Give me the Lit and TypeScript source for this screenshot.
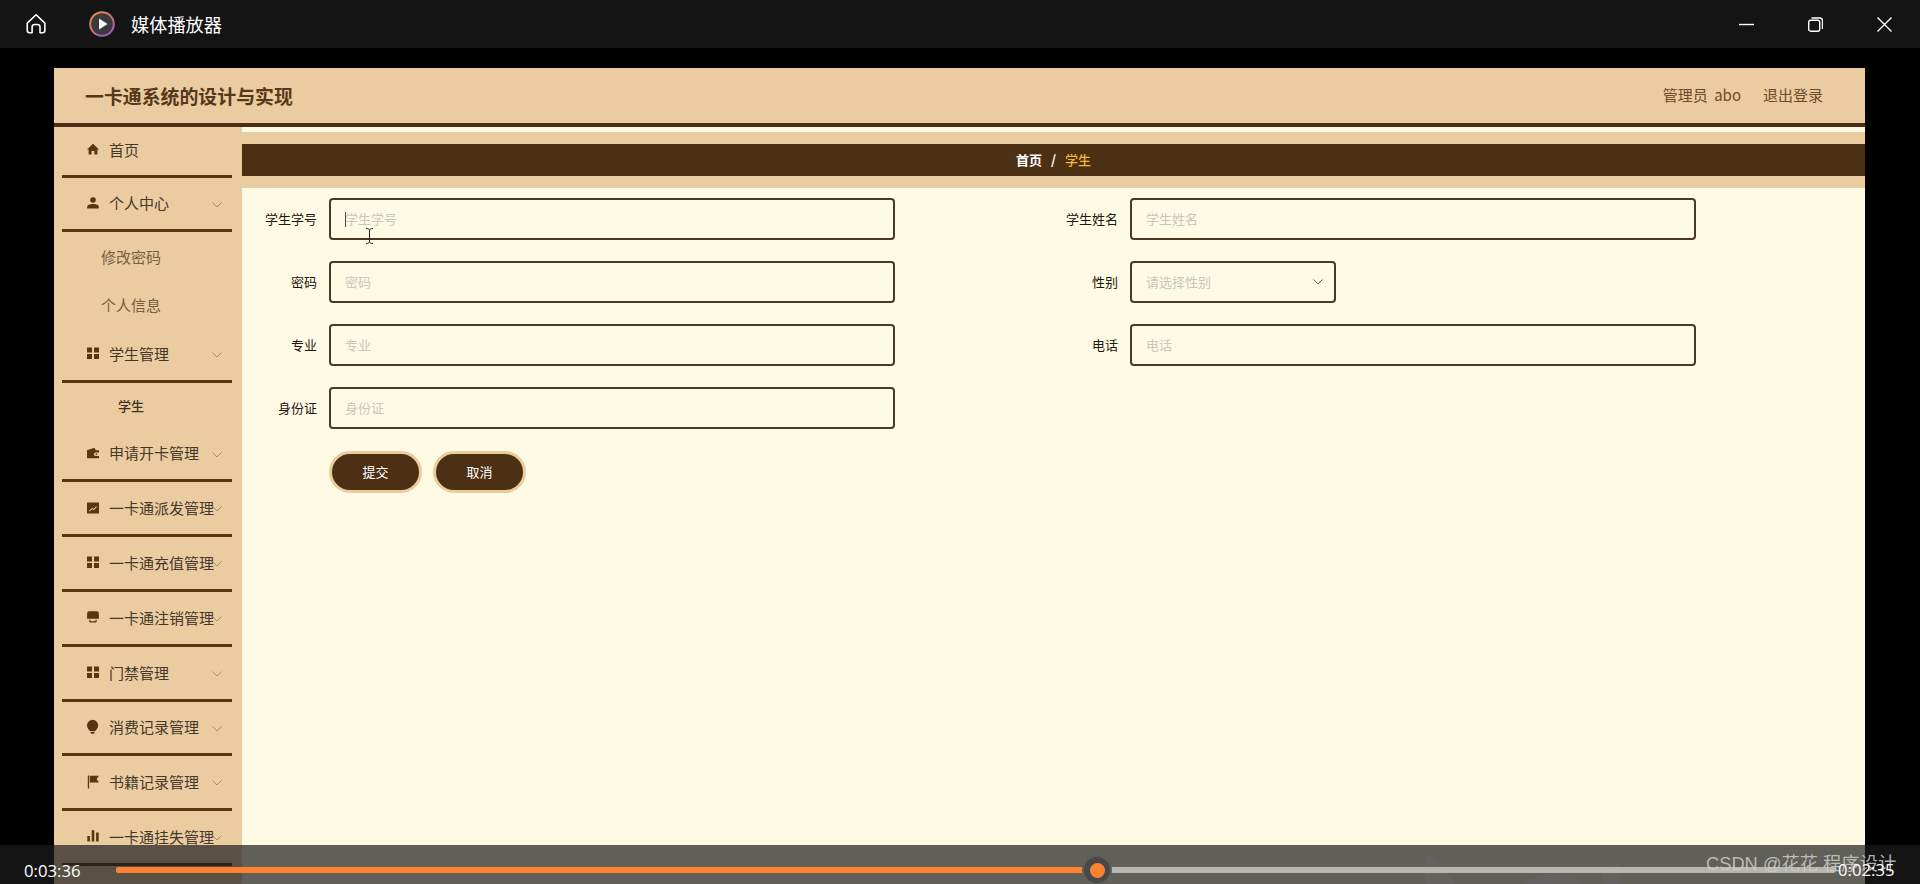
import { LitElement, html, css, svg } from "lit";
import { customElement } from "lit/decorators.js";

const icons: Record<string, unknown> = {
  home: svg`<path d="M6 .8 12 6.400h-1.600v5.200H7.400V8H4.600v3.600H1.600V6.400H0z"/>`,
  user: svg`<circle cx="6" cy="3" r="2.800"/><path d="M.2 11.400V9.800C.2 8 2.800 7 6 7s5.800 1 5.800 2.800v1.600z"/>`,
  menu: svg`<path d="M0 .5h5v5H0zM7 .5h5v5H7zM0 7h5v5H0zM7 7h5v5H7z"/>`,
  wallet: svg`<path fill-rule="evenodd" d="M0 3.200 7.600.8l1 2.400H12v2.200H8.600a1.800 1.800 0 0 0 0 3.600H12v2.200H0zM8.600 6.400h1.600v1.600H8.600z"/>`,
  chart: svg`<path fill-rule="evenodd" d="M0 .5h12v11H0zM2 8.800l.7.7 2.600-2.400 1.500 1.200 3-3.400-.7-.6-2.400 2.700-1.400-1.200z"/>`,
  print: svg`<path d="M2 .3h8a1.800 1.800 0 0 1 1.800 1.700l.2 5.800H0L.2 2A1.800 1.800 0 0 1 2 .3z"/><path fill-rule="evenodd" d="M2.200 8.800h7.600l-.4 2.700H2.600zM3.500 8.800h5l-.2 1.500H3.700z"/>`,
  bulb: svg`<path d="M5.600-1.200a5.600 5.600 0 0 1 5.600 5.600c0 2.500-1.800 3.900-2.800 5.700H2.800C1.800 8.300 0 6.900 0 4.400A5.600 5.600 0 0 1 5.600-1.200zM3.300 10.800h4.600l-.9 2H4.200z"/>`,
  flag: svg`<path d="M.8-.5h1.300v13H.8zM2.800-.2h9.200L9.600 3l2.400 3.400H2.800z"/>`,
  bars: svg`<path d="M.3 6h2.600v5.500H.3zM4.700.3h2.600v11.200H4.700zM9.100 2.500h2.600v9H9.100z"/>`,
};

const icon = (n: string) => html`<svg class="ic" viewBox="0 0 12 12">${icons[n]}</svg>`;
const chev = html`<svg class="chev" viewBox="0 0 10 6"><path d="M.5.500 5 5 9.500.500"/></svg>`;

type Item = { i: string; t: string };
const after: Item[] = [
  { i: "chart", t: "一卡通派发管理" },
  { i: "menu", t: "一卡通充值管理" },
  { i: "print", t: "一卡通注销管理" },
  { i: "menu", t: "门禁管理" },
  { i: "bulb", t: "消费记录管理" },
  { i: "flag", t: "书籍记录管理" },
  { i: "bars", t: "一卡通挂失管理" },
];

@customElement("app-root")
export class AppRoot extends LitElement {
  static styles = css`
    :host {
      display: block;
      position: relative;
      width: 1920px;
      height: 884px;
      overflow: hidden;
      background: #000;
      font-family: "Noto Sans CJK SC", "Noto Sans", sans-serif;
    }
    .titlebar {
      height: 48px;
      background: #141414;
      display: flex;
      align-items: center;
      color: #fff;
      font-size: 18px;
    }
    .tb-home { width: 24px; height: 24px; margin-left: 24px; fill: none; stroke: #fff; stroke-width: 1.8; stroke-linejoin: round; }
    .tb-logo { width: 26px; height: 26px; margin-left: 41px; }
    .tb-title { margin-left: 16px; font-size: 18.200px; }
    .win { margin-left: auto; display: flex; align-items: center; gap: 54px; margin-right: 28px; }
    .win svg { width: 15px; height: 15px; fill: none; stroke: #fff; stroke-width: 1.4; display: block; }
    .frame { margin: 20px 55px 0 54px; }
    .hdr {
      height: 55px;
      background: #ebcca1;
      border-bottom: 4px solid #4b2e14;
      display: flex;
      align-items: center;
      padding: 0 42px 0 31px;
      color: #6a4a28;
      font-size: 15px;
    }
    .brand { font-size: 18.900px; font-weight: 700; color: #55381a; }
    .hdr-r { margin-left: auto; display: flex; gap: 22px; word-spacing: 3px; padding-bottom: 2px; }
    .body { display: flex; }
    .side {
      width: 188px;
      flex: none;
      background: #ebcca1;
      box-sizing: border-box;
      padding: 0 10px 0 8px;
      height: 760px;
    }
    .it {
      position: relative;
      height: 54.800px;
      box-sizing: border-box;
      border-bottom: 3px solid #593510;
      display: flex;
      align-items: center;
      padding: 0 0 1.500px 25px;
      font-size: 15px;
      color: #43382a;
      white-space: nowrap;
    }
    .it.first { height: 50.500px; padding-bottom: 3px; }
    .ic { width: 12px; height: 12px; fill: #593510; flex: none; margin-right: 10px; overflow: visible; }
    .chev {
      position: absolute;
      right: 10px;
      top: 24px;
      width: 10px;
      height: 6px;
      fill: none;
      stroke: #a98e6c;
      stroke-width: 1;
    }
    .sub { height: 48px; display: flex; align-items: center; padding-left: 39px; font-size: 15px; color: #75603f; }
    .sub2 { height: 43.600px; display: flex; align-items: center; padding: 1px 0 0 56px; font-size: 13px; font-weight: 500; color: #3e3020; }
    .main { flex: 1; min-width: 0; background: #fffae3; }
    .strip { height: 5px; }
    .crumbband {
      background: #ebcca1;
      padding: 12px 0;
    }
    .crumb {
      height: 32px;
      box-sizing: border-box;
      padding-bottom: 2px;
      background: #4c3014;
      display: flex;
      align-items: center;
      justify-content: center;
      gap: 9px;
      font-size: 13px;
      font-weight: 700;
      color: #fff;
    }
    .crumb b { color: #f2b632; font-weight: 500; }
    .form {
      display: grid;
      grid-template-columns: 1fr 1fr;
      row-gap: 21px;
      padding: 10px 11px 0 10px;
    }
    .row { display: flex; align-items: center; height: 42px; }
    .lab {
      width: 65px;
      flex: none;
      margin-right: 12px;
      padding-bottom: 2px;
      text-align: right;
      font-size: 13px;
      font-weight: 400;
      color: #1c1710;
      white-space: nowrap;
    }
    .fld {
      position: relative;
      width: 566px;
      height: 42px;
      box-sizing: border-box;
      border: 2px solid #4b3a22;
      border-radius: 4px;
      background: #fffae3;
      display: block;
    }
    .fld input {
      width: 100%;
      height: 100%;
      box-sizing: border-box;
      border: 0;
      outline: 0;
      padding: 0 14px 2px;
      background: transparent;
      font: inherit;
      font-size: 13px;
    }
    .fld input::placeholder { color: #c9c6bc; opacity: 1; }
    .caret { position: absolute; left: 14px; top: 12px; width: 1px; height: 15px; background: #4a4a4a; }
    .beam { position: absolute; left: 34px; top: 28px; width: 9px; height: 16px; fill: none; stroke: #222; stroke-width: 1; }
    .sel {
      width: 206px;
      display: flex;
      align-items: center;
      padding: 0 14px 2px;
      font-size: 13px;
      color: #c9c6bc;
    }
    .sel svg { margin: 2px -3px 0 auto; width: 10px; height: 6px; fill: none; stroke: #6b6658; stroke-width: 1; }
    .btns { display: flex; gap: 11px; padding: 22px 0 0 87px; }
    .btn {
      width: 93px;
      height: 42px;
      box-sizing: border-box;
      border: 3px solid #ebcca1;
      border-radius: 21px;
      background: #4c3014;
      color: #fff;
      font: inherit;
      font-size: 13px;
      font-weight: 400;
      padding: 0 0 2px;
    }
    .player {
      position: absolute;
      left: 0;
      right: 0;
      top: 845px;
      height: 39px;
      box-sizing: border-box;
      padding-top: 11px;
      background: rgba(28, 28, 28, 0.7);
      display: flex;
      align-items: center;
      color: #fff;
      font-family: "Open Sans", "Liberation Sans", sans-serif;
      font-size: 16.700px;
    }
    .ghost { position: absolute; left: 1420px; top: 0; width: 200px; height: 39px; fill: rgba(110, 110, 130, 0.22); }
    .t1 { margin-left: 24px; width: 92px; flex: none; }
    .track { position: relative; width: 1720px; height: 6px; background: #b8b7af; flex: none; border-radius: 3px; }
    .fill { height: 100%; background: #ff8230; border-radius: 3px; }
    .knob {
      position: absolute;
      left: 966px;
      top: -12px;
      width: 30px;
      height: 30px;
      box-sizing: border-box;
      border-radius: 50%;
      background: #484848;
      border: 2px solid #5e5e5c;
      display: flex;
      align-items: center;
      justify-content: center;
    }
    .knob i { width: 15px; height: 15px; border-radius: 50%; background: #ff8230; }
    .t2 { position: absolute; left: 1838px; top: 14px; line-height: 22px; }
    .wm {
      position: absolute;
      left: 1706px;
      top: 6px;
      line-height: 26px;
      font-family: "Liberation Sans", "Noto Sans CJK SC", sans-serif;
      font-size: 18.300px;
      color: rgba(205, 205, 205, 0.85);
      white-space: nowrap;
    }
  `;

  private field(label: string, caret = false) {
    return html`<div class="row">
      <span class="lab">${label}</span>
      <label class="fld">
        <input placeholder=${label} />
        ${caret
          ? html`<span class="caret"></span>
              <svg class="beam" viewBox="0 0 9 16"><path d="M1 .5c2 0 3 .5 3.500 1.500C5 1 6 .5 8 .5M4.500 2v12M1 15.500c2 0 3-.5 3.500-1.500.5 1 1.500 1.500 3.500 1.500"/></svg>`
          : ""}
      </label>
    </div>`;
  }

  render() {
    return html`
      <div class="titlebar">
        <svg class="tb-home" viewBox="0 0 24 24"><path d="M2 11.500 12 2l10 9.500V20a2.500 2.500 0 0 1-2.500 2.500h-3V16a3 3 0 0 0-3-3h-3a3 3 0 0 0-3 3v6.500h-3A2.500 2.500 0 0 1 2 20z" transform="translate(1.500 1) scale(.88)"/></svg>
        <svg class="tb-logo" viewBox="0 0 26 26">
          <defs><linearGradient id="lg" x1="0.200" y1="0" x2="0.800" y2="1"><stop offset="0" stop-color="#f28a3c"/><stop offset="1" stop-color="#9a5cc8"/></linearGradient></defs>
          <circle cx="13" cy="13" r="11.800" fill="#3a3a3c" stroke="url(#lg)" stroke-width="2"/>
          <path d="M10 7.500 18.500 13 10 18.500z" fill="#fff"/>
        </svg>
        <span class="tb-title">媒体播放器</span>
        <div class="win">
          <svg viewBox="0 0 15 15"><path d="M0 7.500h15"/></svg>
          <svg viewBox="0 0 15 15"><rect x=".7" y="3.200" width="11" height="11" rx="2"/><path d="M3.500 1h8.500a2.500 2.500 0 0 1 2.500 2.500V12"/></svg>
          <svg viewBox="0 0 15 15"><path d="M.5.500l14 14M14.500.500l-14 14"/></svg>
        </div>
      </div>
      <div class="frame">
        <div class="hdr">
          <span class="brand">一卡通系统的设计与实现</span>
          <div class="hdr-r"><span>管理员 abo</span><span>退出登录</span></div>
        </div>
        <div class="body">
          <nav class="side">
            <div class="it first">${icon("home")}首页</div>
            <div class="it">${icon("user")}个人中心${chev}</div>
            <div class="sub">修改密码</div>
            <div class="sub">个人信息</div>
            <div class="it">${icon("menu")}学生管理${chev}</div>
            <div class="sub2">学生</div>
            <div class="it">${icon("wallet")}申请开卡管理${chev}</div>
            ${after.map((a) => html`<div class="it">${icon(a.i)}${a.t}${chev}</div>`)}
          </nav>
          <main class="main">
            <div class="strip"></div>
            <div class="crumbband">
              <div class="crumb"><span>首页</span><span>/</span><b>学生</b></div>
            </div>
            <div class="form">
              ${this.field("学生学号", true)}
              ${this.field("学生姓名")}
              ${this.field("密码")}
              <div class="row">
                <span class="lab">性别</span>
                <div class="fld sel">请选择性别<svg viewBox="0 0 10 6"><path d="M.5.500 5 5 9.500.500"/></svg></div>
              </div>
              ${this.field("专业")}
              ${this.field("电话")}
              ${this.field("身份证")}
            </div>
            <div class="btns">
              <button class="btn">提交</button>
              <button class="btn">取消</button>
            </div>
          </main>
        </div>
      </div>
      <div class="player">
        <svg class="ghost" viewBox="0 0 200 39"><path d="M5 12 14 10 36 39H5zM105 39c10-10 30-14 48-8l10 8zM180 22l20-4v21h-16z"/></svg>
        <span class="t1">0:03:36</span>
        <div class="track">
          <div class="fill" style="width: 981px"></div>
          <div class="knob"><i></i></div>
        </div>
        <span class="wm">CSDN @花花 程序设计</span>
        <span class="t2">0:02:35</span>
      </div>
    `;
  }
}
